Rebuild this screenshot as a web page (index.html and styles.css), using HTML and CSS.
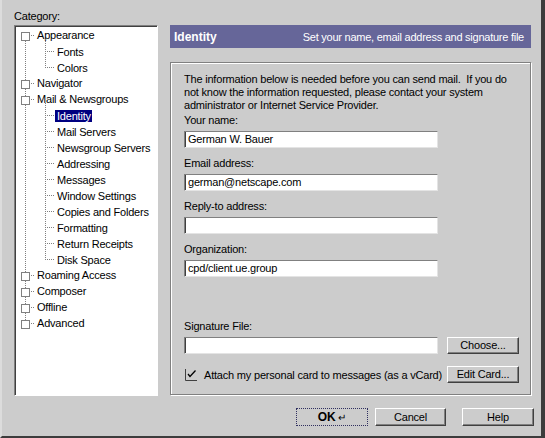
FILE: index.html
```html
<!DOCTYPE html>
<html>
<head>
<meta charset="utf-8">
<link rel="stylesheet" href="styles.css">
</head>
<body>
<div class="window">
  <div class="main">
    <div class="left">
      <div class="cat-label">Category:</div>
      <div class="treebox">
        <ul class="tree">
          <li class="node">
            <div class="row"><span class="box"></span><span class="conn"></span><span class="txt">Appearance</span></div>
            <ul class="kids">
              <li><div class="row"><span class="hconn"></span><span class="txt">Fonts</span></div></li>
              <li><div class="row"><span class="hconn"></span><span class="txt">Colors</span></div></li>
            </ul>
          </li>
          <li class="node">
            <div class="row"><span class="box"></span><span class="conn"></span><span class="txt">Navigator</span></div>
          </li>
          <li class="node">
            <div class="row"><span class="box"></span><span class="conn"></span><span class="txt">Mail &amp; Newsgroups</span></div>
            <ul class="kids">
              <li><div class="row"><span class="hconn"></span><span class="txt sel">Identity</span></div></li>
              <li><div class="row"><span class="hconn"></span><span class="txt">Mail Servers</span></div></li>
              <li><div class="row"><span class="hconn"></span><span class="txt">Newsgroup Servers</span></div></li>
              <li><div class="row"><span class="hconn"></span><span class="txt">Addressing</span></div></li>
              <li><div class="row"><span class="hconn"></span><span class="txt">Messages</span></div></li>
              <li><div class="row"><span class="hconn"></span><span class="txt">Window Settings</span></div></li>
              <li><div class="row"><span class="hconn"></span><span class="txt">Copies and Folders</span></div></li>
              <li><div class="row"><span class="hconn"></span><span class="txt">Formatting</span></div></li>
              <li><div class="row"><span class="hconn"></span><span class="txt">Return Receipts</span></div></li>
              <li><div class="row"><span class="hconn"></span><span class="txt">Disk Space</span></div></li>
            </ul>
          </li>
          <li class="node">
            <div class="row"><span class="box"></span><span class="conn"></span><span class="txt">Roaming Access</span></div>
          </li>
          <li class="node">
            <div class="row"><span class="box"></span><span class="conn"></span><span class="txt">Composer</span></div>
          </li>
          <li class="node">
            <div class="row"><span class="box"></span><span class="conn"></span><span class="txt">Offline</span></div>
          </li>
          <li class="node">
            <div class="row"><span class="box"></span><span class="conn"></span><span class="txt">Advanced</span></div>
          </li>
        </ul>
      </div>
    </div>
    <div class="right">
      <div class="header">
        <span class="h-title">Identity</span>
        <span class="h-sub">Set your name, email address and signature file</span>
      </div>
      <div class="group">
        <p class="intro">The information below is needed before you can send mail.&nbsp; If you do<br>not know the information requested, please contact your system<br>administrator or Internet Service Provider.</p>
        <div class="field">
          <div class="flabel">Your name:</div>
          <div class="input">German W. Bauer</div>
        </div>
        <div class="field">
          <div class="flabel">Email address:</div>
          <div class="input">german@netscape.com</div>
        </div>
        <div class="field">
          <div class="flabel">Reply-to address:</div>
          <div class="input"></div>
        </div>
        <div class="field">
          <div class="flabel">Organization:</div>
          <div class="input">cpd/client.ue.group</div>
        </div>
        <div class="sig">
          <div class="flabel">Signature File:</div>
          <div class="sig-row">
            <div class="input"></div>
            <div class="btn">Choose...</div>
          </div>
          <div class="sig-row check-row">
            <div class="check">
              <svg class="cb" width="13" height="13" viewBox="0 0 13 13">
                <path d="M0.5 1 V12.5 H12" fill="none" stroke="#404040" stroke-width="1"/>
                <path d="M3 6 L5 8.5 L10.5 2.5" fill="none" stroke="#000" stroke-width="1.3"/>
              </svg>
              <span>Attach my personal card to messages (as a vCard)</span>
            </div>
            <div class="btn">Edit Card...</div>
          </div>
        </div>
      </div>
    </div>
  </div>
  <div class="buttons">
    <div class="btn btn-ok"><span class="ok-in"><b>OK</b> <span class="ret">&#x21B5;</span></span></div>
    <div class="btn btn-cancel">Cancel</div>
    <div class="btn">Help</div>
  </div>
</div>
</body>
</html>
```

FILE: styles.css
```css
html, body {
  margin: 0;
  padding: 0;
  background: #cccccc;
}

.window {
  width: 545px;
  height: 438px;
  box-sizing: border-box;
  background: #cccccc;
  border-right: 4px solid #3c3c3c;
  border-bottom: 2px solid #3c3c3c;
  border-left: 2px solid #dcdcdc;
  font-family: "Liberation Sans", Arial, sans-serif;
  font-size: 11px;
  letter-spacing: -0.2px;
  color: #000;
  display: flex;
  flex-direction: column;
}

.main {
  display: flex;
  padding: 10px 0 0 12px;
}

.left {
  width: 144px;
  display: flex;
  flex-direction: column;
}

.cat-label {
  height: 15px;
  line-height: 12px;
}

.treebox {
  height: 371px;
  box-sizing: border-box;
  background: #fff;
  border-top: 1px solid #808080;
  border-left: 1px solid #808080;
  border-right: 1px solid #ffffff;
  border-bottom: 1px solid #ffffff;
  box-shadow: inset 1px 1px #404040;
  padding: 1px 0 0 1px;
}

.tree, .kids {
  list-style: none;
  margin: 0;
  padding: 0;
}

.node {
  position: relative;
}

.node::before {
  content: "";
  position: absolute;
  left: 9px;
  top: 0;
  bottom: 0;
  width: 1px;
  background: repeating-linear-gradient(to bottom, #808080 0 1px, transparent 1px 2px);
}

.node:first-child::before {
  top: 14px;
}

.node:last-child::before {
  bottom: auto;
  height: 5px;
}

.row {
  height: 16px;
  display: flex;
  align-items: flex-start;
  position: relative;
}

.node > .row {
  padding-left: 5px;
}

.box {
  width: 9px;
  height: 9px;
  box-sizing: border-box;
  border: 1px solid #808080;
  background: #fff;
  margin-top: 5px;
  position: relative;
  z-index: 1;
  flex: none;
}

.conn {
  width: 4px;
  height: 1px;
  margin: 8px 2px 0 1px;
  background: repeating-linear-gradient(to right, #808080 0 1px, transparent 1px 2px);
  flex: none;
}

.txt {
  display: inline-block;
  line-height: 12px;
  height: 12px;
  margin-top: 2px;
  white-space: nowrap;
}

.kids li {
  position: relative;
}

.kids li::before {
  content: "";
  position: absolute;
  left: 29px;
  top: 0;
  bottom: 0;
  width: 1px;
  background: repeating-linear-gradient(to bottom, #808080 0 1px, transparent 1px 2px);
}

.kids li:first-child::before {
  top: -4px;
}

.kids li:last-child::before {
  bottom: auto;
  height: 9px;
}

.kids .row {
  padding-left: 29px;
}

.hconn {
  width: 9px;
  height: 1px;
  margin: 8px 1px 0 0;
  background: repeating-linear-gradient(to right, #808080 0 1px, transparent 1px 2px);
  flex: none;
}

.kids .txt {
  padding: 0 1px 0 2px;
  margin-top: 3px;
}

.sel {
  background: #000080;
  color: #fff;
}

.right {
  width: 361px;
  margin-left: 12px;
  display: flex;
  flex-direction: column;
}

.header {
  margin-top: 15px;
  height: 23px;
  background: #666699;
  color: #fff;
  display: flex;
  align-items: center;
  justify-content: space-between;
  padding: 0 7px 0 4px;
}

.h-title {
  font-weight: bold;
  font-size: 12px;
  letter-spacing: 0;
}

.h-sub {
  font-size: 11px;
  letter-spacing: -0.25px;
  white-space: nowrap;
}

.group {
  margin-top: 14px;
  height: 333px;
  box-sizing: border-box;
  border: 1px solid #808080;
  box-shadow: inset 1px 1px #ffffff, 1px 1px #ffffff;
  padding: 10px 11px 11px 13px;
  display: flex;
  flex-direction: column;
}

.intro {
  margin: 0;
  line-height: 13px;
  white-space: nowrap;
}

.field {
  display: flex;
  flex-direction: column;
}

.flabel {
  line-height: 13px;
  margin-top: 2px;
  margin-bottom: 4px;
}

.field + .field .flabel {
  margin-top: 9px;
}

.input {
  width: 254px;
  height: 17px;
  box-sizing: border-box;
  background: #fff;
  border-top: 1px solid #808080;
  border-left: 1px solid #808080;
  border-right: 1px solid #e4e4e4;
  border-bottom: 1px solid #e4e4e4;
  box-shadow: inset 1px 0 #404040;
  padding: 0 0 0 3px;
  line-height: 15px;
  white-space: nowrap;
}

.sig {
  margin-top: auto;
  display: flex;
  flex-direction: column;
}

.sig-row {
  display: flex;
  align-items: center;
  justify-content: space-between;
}

.check-row {
  margin-top: 12px;
}

.check {
  display: flex;
  align-items: center;
  white-space: nowrap;
}

.cb {
  margin: 0 6px 0 1px;
  flex: none;
}

.btn {
  width: 72px;
  height: 17px;
  box-sizing: border-box;
  border: 1px solid;
  border-color: #ffffff #404040 #404040 #ffffff;
  box-shadow: inset -1px -1px #808080;
  background: #cccccc;
  display: flex;
  align-items: center;
  justify-content: center;
  line-height: 13px;
  white-space: nowrap;
}

.buttons {
  display: flex;
  justify-content: flex-end;
  padding: 12px 7px 0 0;
}

.buttons .btn {
  height: 18px;
}

.btn-ok {
  border: 1px dotted #303060;
  box-shadow: none;
  margin-right: 7px;
}

.btn-cancel {
  width: 71px;
  margin-right: 16px;
}

.ok-in b {
  font-size: 12px;
}

.ret {
  font-size: 10px;
}
```
